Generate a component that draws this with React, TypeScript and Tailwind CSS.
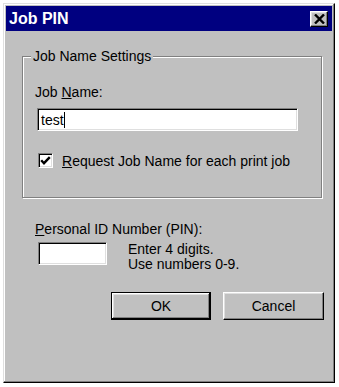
import React from "react";

const raised =
  "border border-t-white border-l-white border-r-black border-b-black shadow-[inset_-1px_-1px_#808080,inset_1px_1px_#dfdfdf]";
const sunken =
  "border border-t-[#808080] border-l-[#808080] border-r-white border-b-white shadow-[inset_1px_1px_#000,inset_-1px_-1px_#dfdfdf]";

export default function App() {
  return (
    <div className="w-[339px] h-[387px] bg-white pt-[3px] pl-[3px] font-['Liberation_Sans',Arial,sans-serif] text-[14px] text-black">
      <div className="w-[332px] h-[380px] bg-[#c0c0c0] border border-t-[#dfdfdf] border-l-[#dfdfdf] border-r-black border-b-black shadow-[inset_-1px_-1px_#808080,inset_1px_1px_#fff] p-[2px] flex flex-col">
        {/* Title bar */}
        <div className="h-[25px] bg-[#000080] flex items-center justify-between pl-[3px] pr-[4px]">
          <span className="text-white font-bold text-[16px] leading-none">Job PIN</span>
          <div className={`w-[18px] h-[16px] bg-[#c0c0c0] flex items-center justify-center ${raised}`}>
            <svg width="11" height="10" viewBox="0 0 11 10">
              <path d="M1 0.5 L10 9.5 M10 0.5 L1 9.5" stroke="#000" strokeWidth="2.4" />
            </svg>
          </div>
        </div>

        {/* Group box */}
        <div className="relative mt-[25px] ml-[16px] w-[300px] h-[142px] border border-[#808080] shadow-[inset_1px_1px_#fff,1px_1px_#fff] pt-[26px] pl-[12px]">
          <span className="absolute top-[-10px] left-[8px] bg-[#c0c0c0] px-[2px] leading-[18px]">
            Job Name Settings
          </span>
          <div className="leading-[18px] h-[18px]">
            Job <span className="underline">N</span>ame:
          </div>
          <div className={`mt-[7px] ml-[2px] w-[261px] h-[23px] bg-white flex items-center pl-[3px] ${sunken}`}>
            <span className="leading-[16px]">test</span>
            <span className="w-px h-[16px] bg-black" />
          </div>
          <div className="mt-[22px] ml-[3px] flex items-center h-[15px]">
            <div className={`w-[15px] h-[15px] bg-white flex items-center justify-center shrink-0 ${sunken}`}>
              <svg width="11" height="10" viewBox="0 0 11 10">
                <path d="M1.2 4.2 L4 7.2 L9.8 1.2" stroke="#000" strokeWidth="2.4" fill="none" />
              </svg>
            </div>
            <span className="ml-[9px] leading-[18px] whitespace-nowrap">
              <span className="underline">R</span>equest Job Name for each print job
            </span>
          </div>
        </div>

        {/* PIN */}
        <div className="mt-[22px] ml-[29px] leading-[18px] h-[18px]">
          <span className="underline">P</span>ersonal ID Number (PIN):
        </div>
        <div className="mt-[4px] ml-[32px] flex items-start h-[30px]">
          <div className={`w-[69px] h-[23px] bg-white shrink-0 ${sunken}`} />
          <div className="ml-[21px] leading-[15px]">
            <div>Enter 4 digits.</div>
            <div>Use numbers 0-9.</div>
          </div>
        </div>

        {/* Buttons */}
        <div className="mt-[20px] flex justify-end gap-[12px] pr-[8px]">
          <div className="w-[100px] h-[28px] bg-[#c0c0c0] border border-black shadow-[inset_-1px_-1px_#000,inset_1px_1px_#fff,inset_-2px_-2px_#808080,inset_2px_2px_#dfdfdf] flex items-center justify-center">
            OK
          </div>
          <div className={`w-[101px] h-[28px] bg-[#c0c0c0] flex items-center justify-center ${raised}`}>
            Cancel
          </div>
        </div>
      </div>
    </div>
  );
}
